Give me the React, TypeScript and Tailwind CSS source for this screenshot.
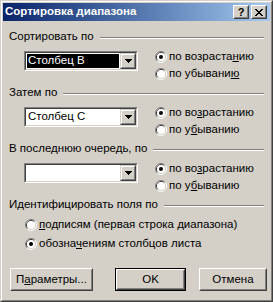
import React from 'react';

// & marks the mnemonic letter
const mn = (t: string) => {
  const i = t.indexOf('&');
  if (i < 0) return t;
  return (
    <>
      {t.slice(0, i)}
      <u>{t[i + 1]}</u>
      {t.slice(i + 2)}
    </>
  );
};

const Radio = ({ checked }: { checked?: boolean }) => (
  <svg width="12" height="12" viewBox="0 0 12 12" className="shrink-0">
    <path d="M2.11 9.89A5.5 5.5 0 0 1 9.89 2.11" fill="none" stroke="#808080" />
    <path d="M9.89 2.11A5.5 5.5 0 0 1 2.11 9.89" fill="none" stroke="#ffffff" />
    <path d="M2.82 9.18A4.5 4.5 0 0 1 9.18 2.82" fill="none" stroke="#404040" />
    <path d="M9.18 2.82A4.5 4.5 0 0 1 2.82 9.18" fill="none" stroke="#d4d0c8" />
    <circle cx="6" cy="6" r="4" fill="#ffffff" />
    {checked && <circle cx="6" cy="6" r="2" fill="#000000" />}
  </svg>
);

const RadioRow = ({ text, checked }: { text: string; checked?: boolean }) => (
  <div className="flex items-center h-[17px]">
    <Radio checked={checked} />
    <span className="ml-[2px] whitespace-nowrap">{mn(text)}</span>
  </div>
);

const Header = ({ text }: { text: string }) => (
  <div className="flex items-center h-[14px]">
    <span className="whitespace-nowrap">{text}</span>
    <div className="flex-1 ml-[6px] mt-[2px] h-[2px] border-t border-t-[#808080] border-b border-b-white" />
  </div>
);

const DropBtn = () => (
  <div className="w-[16px] h-full border border-t-[#d4d0c8] border-l-[#d4d0c8] border-r-[#404040] border-b-[#404040]">
    <div className="w-full h-full border border-t-white border-l-white border-r-[#808080] border-b-[#808080] bg-[#d4d0c8] flex items-center justify-center">
      <svg width="7" height="4" viewBox="0 0 7 4" shapeRendering="crispEdges">
        <rect x="0" y="0" width="7" height="1" fill="#000" />
        <rect x="1" y="1" width="5" height="1" fill="#000" />
        <rect x="2" y="2" width="3" height="1" fill="#000" />
        <rect x="3" y="3" width="1" height="1" fill="#000" />
      </svg>
    </div>
  </div>
);

const Combo = ({ value, selected }: { value: string; selected?: boolean }) => (
  <div className="w-[114px] h-[20px] border border-t-[#808080] border-l-[#808080] border-b-white border-r-white">
    <div className="h-full flex bg-white border border-t-[#404040] border-l-[#404040] border-b-[#d4d0c8] border-r-[#d4d0c8]">
      <div className="flex-1 flex p-[1px]">
        <div className={`flex-1 flex items-center pl-[1px] ${selected ? 'bg-black text-white' : ''}`}>{value}</div>
      </div>
      <DropBtn />
    </div>
  </div>
);

const SortSection = ({
  title,
  value,
  selected,
  asc,
  desc,
  first,
}: {
  title: string;
  value: string;
  selected?: boolean;
  asc: string;
  desc: string;
  first?: boolean;
}) => (
  <div className={first ? '' : 'mt-[4px]'}>
    <Header text={title} />
    <div className="mt-[4px] flex">
      <div className="ml-[15px] mt-[3px]">
        <Combo value={value} selected={selected} />
      </div>
      <div className="ml-[17px] flex flex-col">
        <RadioRow text={asc} checked />
        <RadioRow text={desc} />
      </div>
    </div>
  </div>
);

const PushButton = ({ text, width, isDefault }: { text: string; width: string; isDefault?: boolean }) => (
  <div className={`${width} h-[23px] ${isDefault ? 'border border-black' : ''}`}>
    <div className="w-full h-full border border-t-white border-l-white border-r-[#404040] border-b-[#404040]">
      <div className="w-full h-full border border-t-[#d4d0c8] border-l-[#d4d0c8] border-r-[#808080] border-b-[#808080] flex items-center justify-center">
        {mn(text)}
      </div>
    </div>
  </div>
);

const CaptionBtn = ({ children }: { children: React.ReactNode }) => (
  <div className="w-[16px] h-[14px] border border-t-white border-l-white border-r-[#404040] border-b-[#404040]">
    <div className="w-full h-full border border-t-[#d4d0c8] border-l-[#d4d0c8] border-r-[#808080] border-b-[#808080] bg-[#d4d0c8] flex items-center justify-center">
      {children}
    </div>
  </div>
);

export default function App() {
  return (
    <div className="w-[273px] h-[302px] text-[11.5px] text-black font-['Liberation_Sans',Arial,sans-serif] border border-t-[#d4d0c8] border-l-[#d4d0c8] border-r-[#404040] border-b-[#404040]">
      <div className="h-full flex flex-col p-[1px] bg-[#d4d0c8] border border-t-white border-l-white border-r-[#808080] border-b-[#808080]">
        {/* title bar */}
        <div className="h-[18px] flex items-center pl-[2px] pr-[3px] bg-linear-to-r from-[#0a246a] to-[#a6caf0]">
          <span className="flex-1 font-bold text-white whitespace-nowrap">Сортировка диапазона</span>
          <CaptionBtn>
            <span className="font-bold text-[11px] leading-none">?</span>
          </CaptionBtn>
          <div className="ml-[2px]">
            <CaptionBtn>
              <svg width="8" height="7" viewBox="0 0 8 7" shapeRendering="crispEdges">
                <path d="M0 0h2v1h1v1h2V1h1V0h2v1H7v1H6v1H5v1h1v1h1v1h1v1H6V6H5V5H3v1H2v1H0V6h1V5h1V4h1V3H2V2H1V1H0z" fill="#000" />
              </svg>
            </CaptionBtn>
          </div>
        </div>

        {/* body */}
        <div className="pt-[9px] px-[6px]">
          <SortSection first title="Сортировать по" value="Столбец B" selected asc="по возраста&нию" desc="по убывани&ю" />
          <SortSection title="Затем по" value="Столбец C" asc="по во&зрастанию" desc="по у&быванию" />
          <SortSection title="В последнюю очередь, по" value="" asc="по во&зрастанию" desc="по у&быванию" />

          <div className="mt-[4px]">
            <Header text="Идентифицировать поля по" />
            <div className="ml-[16px] mt-[4px]">
              <RadioRow text="&подписям (первая строка диапазона)" />
              <div className="mt-[2px]">
                <RadioRow text="обозна&чениям столбцов листа" checked />
              </div>
            </div>
          </div>

          <div className="mt-[16px] flex">
            <div className="ml-[1px]">
              <PushButton text="П&араметры..." width="w-[83px]" />
            </div>
            <div className="ml-[22px]">
              <PushButton text="OK" width="w-[71px]" isDefault />
            </div>
            <div className="ml-[13px]">
              <PushButton text="Отмена" width="w-[68px]" />
            </div>
          </div>
        </div>
      </div>
    </div>
  );
}
